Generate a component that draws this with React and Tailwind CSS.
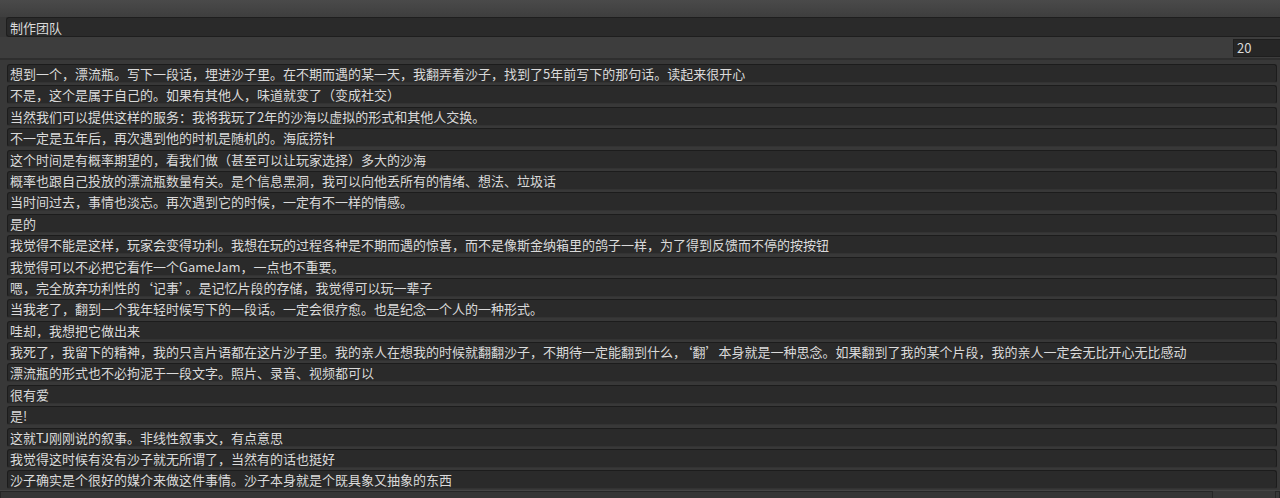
import React from 'react';

const lines = [
  '想到一个，漂流瓶。写下一段话，埋进沙子里。在不期而遇的某一天，我翻弄着沙子，找到了5年前写下的那句话。读起来很开心',
  '不是，这个是属于自己的。如果有其他人，味道就变了（变成社交）',
  '当然我们可以提供这样的服务：我将我玩了2年的沙海以虚拟的形式和其他人交换。',
  '不一定是五年后，再次遇到他的时机是随机的。海底捞针',
  '这个时间是有概率期望的，看我们做（甚至可以让玩家选择）多大的沙海',
  '概率也跟自己投放的漂流瓶数量有关。是个信息黑洞，我可以向他丢所有的情绪、想法、垃圾话',
  '当时间过去，事情也淡忘。再次遇到它的时候，一定有不一样的情感。',
  '是的',
  '我觉得不能是这样，玩家会变得功利。我想在玩的过程各种是不期而遇的惊喜，而不是像斯金纳箱里的鸽子一样，为了得到反馈而不停的按按钮',
  '我觉得可以不必把它看作一个GameJam，一点也不重要。',
  '嗯，完全放弃功利性的‘记事’。是记忆片段的存储，我觉得可以玩一辈子',
  '当我老了，翻到一个我年轻时候写下的一段话。一定会很疗愈。也是纪念一个人的一种形式。',
  '哇却，我想把它做出来',
  '我死了，我留下的精神，我的只言片语都在这片沙子里。我的亲人在想我的时候就翻翻沙子，不期待一定能翻到什么，‘翻’本身就是一种思念。如果翻到了我的某个片段，我的亲人一定会无比开心无比感动',
  '漂流瓶的形式也不必拘泥于一段文字。照片、录音、视频都可以',
  '很有爱',
  '是!',
  '这就TJ刚刚说的叙事。非线性叙事文，有点意思',
  '我觉得这时候有没有沙子就无所谓了，当然有的话也挺好',
  '沙子确实是个很好的媒介来做这件事情。沙子本身就是个既具象又抽象的东西',
];

const font = { fontFamily: '"Noto Sans CJK SC", "Liberation Sans", sans-serif' };

export default function App() {
  return (
    <div className="w-[1280px] h-[498px] overflow-hidden bg-[#383838] text-[13px] text-[#dadada]" style={font}>
      <div className="h-[17px] bg-gradient-to-b from-[#4a4a4a] to-[#3e3e3e]" />
      <div className="h-[20px] pl-[6px]">
        <div className="h-full bg-[#2a2a2a] border border-[#1e1e1e] border-r-0 rounded-l-[3px] pl-[3px] flex items-center leading-none">
          制作团队
        </div>
      </div>
      <div className="h-[23px] bg-[#3d3d3d] border-b-2 border-[#2e2e2e] flex items-center justify-end">
        <div className="w-[47px] h-[18px] bg-[#262626] border border-[#1e1e1e] border-r-0 pl-[3px] flex items-center leading-none">
          20
        </div>
      </div>
      <div className="flex flex-col gap-[2.4px] pl-[7px] pr-[3px] pt-[4px]">
        {lines.map((t, i) => (
          <div
            key={i}
            className="h-[19px] bg-[#2a2a2a] border border-[#1c1c1c] border-b-[#333333] rounded-[3px] pl-[2px] flex items-center leading-none whitespace-nowrap overflow-hidden"
          >
            {t}
          </div>
        ))}
      </div>
      <div className="flex h-[8px] mt-[1px] border-t border-[#444444]">
        <div className="w-[1213px] border border-[#262626] border-b-0 bg-[#353535]" />
        <div className="flex-1" />
        <div className="w-[5px] border border-[#262626] border-b-0" />
      </div>
    </div>
  );
}
